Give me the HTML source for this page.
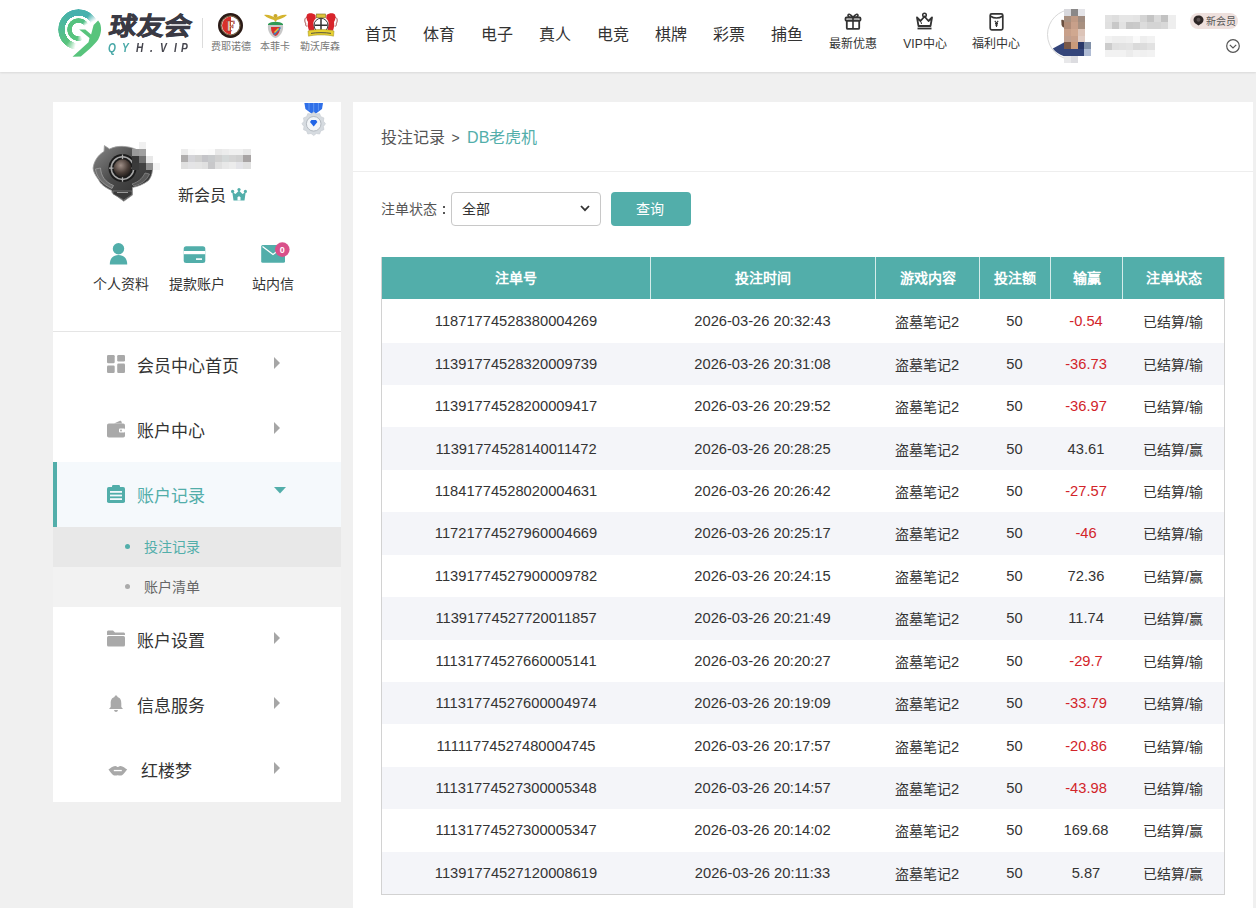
<!DOCTYPE html>
<html lang="zh-CN">
<head>
<meta charset="utf-8">
<style>
*{margin:0;padding:0;box-sizing:border-box}
html,body{width:1256px;height:908px;overflow:hidden;background:#f0f0f0;font-family:"Liberation Sans",sans-serif;color:#333}
.a{position:absolute;white-space:nowrap}
svg{position:absolute;overflow:visible}
#hdr{position:absolute;left:0;top:0;width:1256px;height:72px;background:#fff;box-shadow:0 1px 2px rgba(0,0,0,.10)}
.nav{font-size:16px;color:#333;line-height:20px;top:24.5px}
.hi{font-size:12px;color:#333;line-height:14px;top:37px;width:80px;text-align:center}
.club{font-size:10px;color:#777;line-height:12px;top:40.5px;width:60px;text-align:center}
#side1{position:absolute;left:53px;top:102px;width:288px;height:425px;background:#fff}
#sep{position:absolute;left:53px;top:331px;width:288px;height:1px;background:#e5e5e5}
#act{position:absolute;left:53px;top:462px;width:288px;height:65px;background:#f5f9fc;border-left:4px solid #52aeaa}
#sub1{position:absolute;left:53px;top:527px;width:288px;height:40px;background:#e8e8e8}
#sub2{position:absolute;left:53px;top:567px;width:288px;height:40px;background:#f2f2f2}
#side2{position:absolute;left:53px;top:607px;width:288px;height:195px;background:#fff}
.mi{font-size:17px;color:#333;line-height:20px;left:137px;margin-top:2px}
.sm{font-size:14px;line-height:16px;left:144px}
.dot{position:absolute;left:125px;width:5px;height:5px;border-radius:50%}
.arr{position:absolute;left:274px;width:0;height:0;border-top:6px solid transparent;border-bottom:6px solid transparent;border-left:6px solid #a6a6a6}
.qi{font-size:14px;color:#333;line-height:16px;top:276px;width:76px;text-align:center}
#main{position:absolute;left:353px;top:102px;width:900px;height:806px;background:#fff}
#bcl{position:absolute;left:353px;top:171px;width:900px;height:1px;background:#eee}
table{position:absolute;left:381px;top:256.5px;width:844px;border-collapse:separate;border-spacing:0;table-layout:fixed;border:1px solid #d2d2d2;border-top:none}
th{background:#52aeaa;color:#fff;font-size:14px;font-weight:bold;height:42.5px;border-left:1px solid #d5ecea;padding:0;text-align:center;line-height:16px;padding-top:0}
th:first-child{border-left:none}
td{height:42.43px;font-size:14px;color:#333;text-align:center;padding:0}
.n{font-size:14.7px}
tbody tr:nth-child(even) td{background:#f4f5f9}
tbody tr:first-child td{height:43.6px}
.neg{color:#d2242a}
</style>
</head>
<body>
<div id="hdr"></div>
<!-- LOGO -->
<div class="a" style="left:58.15px;top:8.75px;width:40.9px;height:40.9px;border-radius:50%;background:conic-gradient(from 190deg, rgba(88,197,122,0) 0deg, #58c47c 30deg, #4fb99a 95deg, #46b0ad 150deg, #48b1ae 205deg, rgba(72,177,174,0) 232deg, rgba(0,0,0,0) 360deg);-webkit-mask:radial-gradient(circle closest-side, transparent 66.5%, #000 67.5%, #000 99%, transparent 100%)"></div>
<div class="a" style="left:67.1px;top:17.7px;width:23px;height:23px;border-radius:50%;background:conic-gradient(from 158deg, rgba(90,196,126,0) 0deg, #58c47e 30deg, #56c27f 200deg, #52bf86 235deg, rgba(82,191,134,0) 261deg, rgba(0,0,0,0) 360deg);-webkit-mask:radial-gradient(circle closest-side, transparent 57.5%, #000 59%, #000 98%, transparent 100%)"></div>
<svg style="left:54px;top:4px" width="52" height="58" viewBox="0 0 52 58">
 <path d="M25.2 25.6 L31.3 25.6 L37.1 30.5 L39.6 21.1 L44.1 16.6 L46 19.2 C47 22 47.3 25 47 26.8 C46.6 30 45.6 33 44.1 35.8 C41.5 39.5 38.5 42 35.8 44.7 L26.8 52.4 L18.5 52.7 L34.5 38.3 L35.5 34 Z" fill="#58c47c"/>
</svg>
<div class="a" style="left:109.5px;top:11px;font-size:25px;line-height:30px;font-weight:bold;-webkit-text-stroke:.7px #3a3a44;color:#3a3a44;transform-origin:0 50%;transform:scaleX(1.09) skewX(-9deg);letter-spacing:0px">球友会</div>
<div class="a" style="left:108px;top:41px;font-size:13px;line-height:14px;font-weight:bold;font-style:italic;color:#4aa9a8;transform-origin:0 0;transform:scaleX(.78)">Q</div>
<div class="a" style="left:122px;top:41px;font-size:13px;line-height:14px;font-weight:bold;font-style:italic;color:#4aa9a8;transform-origin:0 0;transform:scaleX(.78)">Y</div>
<div class="a" style="left:136px;top:41px;font-size:13px;line-height:14px;font-weight:bold;font-style:italic;color:#46464e;transform-origin:0 0;transform:scaleX(.78)">H</div>
<div class="a" style="left:149.5px;top:41px;font-size:13px;line-height:14px;font-weight:bold;font-style:italic;color:#46464e;transform-origin:0 0;transform:scaleX(.78)">.</div>
<div class="a" style="left:160px;top:41px;font-size:13px;line-height:14px;font-weight:bold;font-style:italic;color:#46464e;transform-origin:0 0;transform:scaleX(.78)">V</div>
<div class="a" style="left:173.5px;top:41px;font-size:13px;line-height:14px;font-weight:bold;font-style:italic;color:#46464e;transform-origin:0 0;transform:scaleX(.78)">I</div>
<div class="a" style="left:181px;top:41px;font-size:13px;line-height:14px;font-weight:bold;font-style:italic;color:#46464e;transform-origin:0 0;transform:scaleX(.78)">P</div>
<div class="a" style="left:202px;top:18px;width:1px;height:30px;background:#dcdcdc"></div>
<!-- clubs -->
<svg style="left:218px;top:12.5px" width="25" height="25" viewBox="0 0 25 25">
 <circle cx="12.5" cy="12.5" r="12.5" fill="#2a1a16"/>
 <circle cx="12.5" cy="12.5" r="9.6" fill="none" stroke="#b89a60" stroke-width=".6"/>
 <circle cx="12.5" cy="12.5" r="9" fill="#fff"/>
 <path d="M13 3.5 A9 9 0 0 0 13 21.5 Z" fill="#d8302a"/>
 <text x="12.8" y="18.2" font-size="14" font-weight="bold" font-family="Liberation Serif" text-anchor="middle" fill="#f3e2cc" stroke="#9a2a20" stroke-width=".5">F</text>
</svg>
<svg style="left:263px;top:12.5px" width="25" height="25" viewBox="0 0 25 25">
 <path d="M1 2 C5 1 9 3 12.5 5 C16 3 20 1 24 2 C21 5 17 6 14 7 L12.5 9 L11 7 C8 6 4 5 1 2 Z" fill="#d4b42e"/>
 <circle cx="12.5" cy="3" r="2" fill="#c9a72a"/>
 <path d="M5 11 C8 8 17 8 20 11 L20 12 L5 12 Z" fill="#2f9a55"/>
 <path d="M5 12 L20 12 C21 18 17 24 12.5 25 C8 24 4 18 5 12 Z" fill="#c8c8c8"/>
 <path d="M8 14 L17 14 C17 19 15 22 12.5 23 C10 22 8 19 8 14 Z" fill="#d9302c"/>
 <path d="M10 21 L17 14 L18 15 L12 22 Z" fill="#3a7ec8"/>
 <path d="M11 19 L15 15 L16 16 L12 20 Z" fill="#e6c630"/>
</svg>
<svg style="left:300px;top:8px" width="42" height="32" viewBox="0 0 42 32">
 <path d="M7 9 C4 10 4.5 14 6 16 C5 17 6 18.5 7.5 18" fill="none" stroke="#9a3a3a" stroke-width=".9"/>
 <path d="M35 9 C38 10 37.5 14 36 16 C37 17 36 18.5 34.5 18" fill="none" stroke="#9a3a3a" stroke-width=".9"/>
 <path d="M7 6.5 C9 4.5 13 5 15.5 7 L15.8 10.5 C14 12 13 14 13.5 17 L14.5 22.5 L9 22.5 C8 20 7.5 17 8 14 C6.5 12 6 9 7 6.5 Z" fill="#d8232a"/>
 <path d="M35 6.5 C33 4.5 29 5 26.5 7 L26.2 10.5 C28 12 29 14 28.5 17 L27.5 22.5 L33 22.5 C34 20 34.5 17 34 14 C35.5 12 36 9 35 6.5 Z" fill="#d8232a"/>
 <rect x="16.5" y="6" width="9" height="3.8" fill="#dcc23a" stroke="#7a6a20" stroke-width=".6"/>
 <circle cx="21" cy="17.3" r="7" fill="#fff" stroke="#333" stroke-width="1"/>
 <path d="M21 10.8 V23.8 M14.5 17.3 H27.5" stroke="#333" stroke-width="1.5"/>
 <path d="M8 23 C14 21 28 21 34 23 L33.5 28.2 C28 26.5 14 26.5 8.5 28.2 Z" fill="#e6d030" stroke="#9a8a20" stroke-width=".5"/>
 <path d="M11 25.4 C16 24.4 26 24.4 31 25.4" fill="none" stroke="#444" stroke-width=".9"/>
</svg>
<div class="a club" style="left:201px">费耶诺德</div>
<div class="a club" style="left:245px">本菲卡</div>
<div class="a club" style="left:290px">勒沃库森</div>
<!-- nav -->
<div class="a nav" style="left:365px">首页</div>
<div class="a nav" style="left:423px">体育</div>
<div class="a nav" style="left:481px">电子</div>
<div class="a nav" style="left:539px">真人</div>
<div class="a nav" style="left:597px">电竞</div>
<div class="a nav" style="left:655px">棋牌</div>
<div class="a nav" style="left:713px">彩票</div>
<div class="a nav" style="left:771px">捕鱼</div>
<!-- header icons -->
<svg style="left:844px;top:12px" width="18" height="18" viewBox="0 0 18 18">
 <path d="M9 5.5 C7 2 4 1.5 4 3.5 C4 5 6.5 5.5 9 5.5 C11.5 5.5 14 5 14 3.5 C14 1.5 11 2 9 5.5Z" fill="none" stroke="#333" stroke-width="1.6"/>
 <rect x="1.5" y="5.5" width="15" height="3.2" rx="1" fill="none" stroke="#333" stroke-width="1.8"/>
 <rect x="2.8" y="8.7" width="12.4" height="8.2" rx="1" fill="none" stroke="#333" stroke-width="1.8"/>
 <path d="M9 5.5 V17" stroke="#333" stroke-width="1.6"/>
</svg>
<svg style="left:915px;top:12px" width="19" height="18" viewBox="0 0 19 18">
 <circle cx="9.5" cy="3" r="1.8" fill="none" stroke="#333" stroke-width="1.5"/>
 <path d="M2 5.5 L5.5 9 L9.5 4.5 L13.5 9 L17 5.5 L15.5 14 H3.5 Z" fill="none" stroke="#333" stroke-width="1.8" stroke-linejoin="round"/>
 <path d="M2.5 16.5 H16.5" stroke="#333" stroke-width="1.8"/>
 <path d="M6 10 L6.5 12" stroke="#333" stroke-width="1"/>
</svg>
<svg style="left:988px;top:12px" width="16" height="19" viewBox="0 0 16 19">
 <rect x="2.2" y="1.8" width="12.6" height="16" rx="1.5" fill="none" stroke="#333" stroke-width="1.7"/>
 <path d="M2.2 4 C6 6.5 11 6.5 14.8 4" fill="none" stroke="#333" stroke-width="1.5"/>
 <path d="M6.8 8.8 L8.5 11 L10.2 8.8 M8.5 11 V15 M7 11.5 H10 M7 13 H10" fill="none" stroke="#333" stroke-width="1.1"/>
</svg>
<div class="a hi" style="left:813px">最新优惠</div>
<div class="a hi" style="left:885px">VIP中心</div>
<div class="a hi" style="left:956px">福利中心</div>
<!-- user -->
<div class="a" style="left:1046.5px;top:8.5px;width:51px;height:51px;border-radius:50%;border:1px solid #d8d8d8;background:#fff"></div>
<div class="a" style="left:1064px;top:6px;width:36px;height:56px;background:#fff"></div>
<svg style="left:1046px;top:8px" width="60" height="57" viewBox="0 0 60 57">
 <path d="M6.8 40.4 L18 34.4 L18 48.2 C13 46.5 9.5 44 6.8 40.4 Z" fill="#34457a"/>
 <path d="M15.3 12 C16.5 11.5 17.5 12 18 12.5 L18 19.5 C16.8 19.5 15.8 18.5 15.5 16.5 Z" fill="#6a5040"/>
</svg>
<div class="a" style="left:1064.1px;top:8.9px;width:7.1px;height:7.1px;background:#d8d8dc"></div>
<div class="a" style="left:1070.8px;top:8.9px;width:7.1px;height:7.1px;background:#8a8888"></div>
<div class="a" style="left:1077.5px;top:8.9px;width:7.1px;height:7.1px;background:#e4e4e8"></div>
<div class="a" style="left:1064.1px;top:15.6px;width:7.1px;height:7.1px;background:#a89080"></div>
<div class="a" style="left:1070.8px;top:15.6px;width:7.1px;height:7.1px;background:#c09a84"></div>
<div class="a" style="left:1077.5px;top:15.6px;width:7.1px;height:7.1px;background:#a08c80"></div>
<div class="a" style="left:1064.1px;top:22.3px;width:7.1px;height:7.1px;background:#b08c78"></div>
<div class="a" style="left:1070.8px;top:22.3px;width:7.1px;height:7.1px;background:#c8a08a"></div>
<div class="a" style="left:1077.5px;top:22.3px;width:7.1px;height:7.1px;background:#a89080"></div>
<div class="a" style="left:1064.1px;top:29.0px;width:7.1px;height:7.1px;background:#c8a08a"></div>
<div class="a" style="left:1070.8px;top:29.0px;width:7.1px;height:7.1px;background:#d0a890"></div>
<div class="a" style="left:1077.5px;top:29.0px;width:7.1px;height:7.1px;background:#dcc4b8"></div>
<div class="a" style="left:1064.1px;top:35.7px;width:7.1px;height:7.1px;background:#c0a090"></div>
<div class="a" style="left:1070.8px;top:35.7px;width:7.1px;height:7.1px;background:#c8a08a"></div>
<div class="a" style="left:1077.5px;top:35.7px;width:7.1px;height:7.1px;background:#e0ccc4"></div>
<div class="a" style="left:1064.1px;top:42.4px;width:7.1px;height:7.1px;background:#7a5848"></div>
<div class="a" style="left:1070.8px;top:42.4px;width:7.1px;height:7.1px;background:#c99a7a"></div>
<div class="a" style="left:1077.5px;top:42.4px;width:7.1px;height:7.1px;background:#2a3868"></div>
<div class="a" style="left:1084.2px;top:42.4px;width:7.1px;height:7.1px;background:#8090a8"></div>
<div class="a" style="left:1064.1px;top:49.1px;width:7.1px;height:7.1px;background:#34457a"></div>
<div class="a" style="left:1070.8px;top:49.1px;width:7.1px;height:7.1px;background:#34457a"></div>
<div class="a" style="left:1077.5px;top:49.1px;width:7.1px;height:7.1px;background:#34457a"></div>
<div class="a" style="left:1084.2px;top:49.1px;width:7.1px;height:7.1px;background:#b0bcd4"></div>
<div class="a" style="left:1064.1px;top:55.8px;width:7.1px;height:7.1px;background:#e8e8ea"></div>
<div class="a" style="left:1070.8px;top:55.8px;width:7.1px;height:7.1px;background:#dcdce0"></div>
<div class="a" style="left:1105.4px;top:15.4px;width:7.4px;height:7.2px;background:#e2e2e2"></div>
<div class="a" style="left:1112.4px;top:15.4px;width:7.4px;height:7.2px;background:#dedede"></div>
<div class="a" style="left:1119.4px;top:15.4px;width:7.4px;height:7.2px;background:#e6e6e6"></div>
<div class="a" style="left:1126.4px;top:15.4px;width:7.4px;height:7.2px;background:#e6e6e6"></div>
<div class="a" style="left:1133.4px;top:15.4px;width:7.4px;height:7.2px;background:#e4e4e4"></div>
<div class="a" style="left:1140.4px;top:15.4px;width:7.4px;height:7.2px;background:#d4d4d4"></div>
<div class="a" style="left:1147.4px;top:15.4px;width:7.4px;height:7.2px;background:#c4c4c4"></div>
<div class="a" style="left:1154.4px;top:15.4px;width:7.4px;height:7.2px;background:#dadada"></div>
<div class="a" style="left:1161.4px;top:15.4px;width:7.4px;height:7.2px;background:#c2c2c2"></div>
<div class="a" style="left:1168.4px;top:15.4px;width:7.4px;height:7.2px;background:#eeeeee"></div>
<div class="a" style="left:1105.4px;top:22.2px;width:7.4px;height:7.2px;background:#e0e0e0"></div>
<div class="a" style="left:1112.4px;top:22.2px;width:7.4px;height:7.2px;background:#c8c8c8"></div>
<div class="a" style="left:1119.4px;top:22.2px;width:7.4px;height:7.2px;background:#e2e2e2"></div>
<div class="a" style="left:1126.4px;top:22.2px;width:7.4px;height:7.2px;background:#c8c8c8"></div>
<div class="a" style="left:1133.4px;top:22.2px;width:7.4px;height:7.2px;background:#cacaca"></div>
<div class="a" style="left:1140.4px;top:22.2px;width:7.4px;height:7.2px;background:#dcdcdc"></div>
<div class="a" style="left:1147.4px;top:22.2px;width:7.4px;height:7.2px;background:#d4d4d4"></div>
<div class="a" style="left:1154.4px;top:22.2px;width:7.4px;height:7.2px;background:#d4d4d4"></div>
<div class="a" style="left:1161.4px;top:22.2px;width:7.4px;height:7.2px;background:#d8d8d8"></div>
<div class="a" style="left:1168.4px;top:22.2px;width:7.4px;height:7.2px;background:#eeeeee"></div>
<div class="a" style="left:1105.4px;top:36.1px;width:7.4px;height:7.4px;background:#f2f2f2"></div>
<div class="a" style="left:1112.4px;top:36.1px;width:7.4px;height:7.4px;background:#eeeeee"></div>
<div class="a" style="left:1119.4px;top:36.1px;width:7.4px;height:7.4px;background:#eeeeee"></div>
<div class="a" style="left:1126.4px;top:36.1px;width:7.4px;height:7.4px;background:#f0f0f0"></div>
<div class="a" style="left:1133.4px;top:36.1px;width:7.4px;height:7.4px;background:#fafafa"></div>
<div class="a" style="left:1140.4px;top:36.1px;width:7.4px;height:7.4px;background:#eeeeee"></div>
<div class="a" style="left:1147.4px;top:36.1px;width:7.4px;height:7.4px;background:#f2f2f2"></div>
<div class="a" style="left:1105.4px;top:43.1px;width:7.4px;height:7.4px;background:#cccccc"></div>
<div class="a" style="left:1112.4px;top:43.1px;width:7.4px;height:7.4px;background:#e0e0e0"></div>
<div class="a" style="left:1119.4px;top:43.1px;width:7.4px;height:7.4px;background:#e2e2e2"></div>
<div class="a" style="left:1126.4px;top:43.1px;width:7.4px;height:7.4px;background:#e4e4e4"></div>
<div class="a" style="left:1133.4px;top:43.1px;width:7.4px;height:7.4px;background:#dadada"></div>
<div class="a" style="left:1140.4px;top:43.1px;width:7.4px;height:7.4px;background:#dcdcdc"></div>
<div class="a" style="left:1147.4px;top:43.1px;width:7.4px;height:7.4px;background:#e2e2e2"></div>
<div class="a" style="left:1105.4px;top:50.1px;width:7.4px;height:7.4px;background:#f2f2f2"></div>
<div class="a" style="left:1112.4px;top:50.1px;width:7.4px;height:7.4px;background:#f2f2f2"></div>
<div class="a" style="left:1119.4px;top:50.1px;width:7.4px;height:7.4px;background:#f2f2f2"></div>
<div class="a" style="left:1126.4px;top:50.1px;width:7.4px;height:7.4px;background:#ececec"></div>
<div class="a" style="left:1133.4px;top:50.1px;width:7.4px;height:7.4px;background:#f2f2f2"></div>
<div class="a" style="left:1140.4px;top:50.1px;width:7.4px;height:7.4px;background:#f0f0f0"></div>
<div class="a" style="left:1147.4px;top:50.1px;width:7.4px;height:7.4px;background:#f2f2f2"></div>
<div class="a" style="left:1190px;top:12.5px;width:48px;height:16.5px;border-radius:8px;background:#eee0dd"></div>
<svg style="left:1193px;top:15px" width="11" height="11" viewBox="0 0 11 11">
 <path d="M5.5 0.5 C8.5 0.5 10.5 2.5 10.5 5 C10.5 7.5 8 9 5.5 10.5 C3 9 0.5 7.5 0.5 5 C0.5 2.5 2.5 0.5 5.5 0.5Z" fill="#2e2626"/>
 <circle cx="5.5" cy="4.8" r="2" fill="#5a5050"/>
</svg>
<div class="a" style="left:1206px;top:14.5px;font-size:10px;line-height:13px;color:#555">新会员</div>
<svg style="left:1226px;top:39px" width="14" height="14" viewBox="0 0 14 14">
 <circle cx="7" cy="7" r="6.3" fill="none" stroke="#555" stroke-width="1.2"/>
 <path d="M3.8 5.8 L7 9 L10.2 5.8" fill="none" stroke="#555" stroke-width="1.2"/>
</svg>

<!-- SIDEBAR -->
<div id="side1"></div>
<div id="sep"></div>
<div id="act"></div>
<div id="sub1"></div>
<div id="sub2"></div>
<div id="side2"></div>
<!-- medal -->
<svg style="left:300px;top:102px" width="28" height="34" viewBox="0 0 28 34">
 <path d="M4.4 1 H23 L22 7 L16 11.5 H11.4 L5.4 7 Z" fill="#2f6fe8"/>
 <path d="M9 1 V8.5 M13.7 1 V11 M18.4 1 V8.5" stroke="#6a9ff4" stroke-width=".8"/>
 <path d="M13.7 10.0 L16.3 12.1 L19.6 11.6 L20.8 14.7 L23.9 15.9 L23.4 19.2 L25.5 21.8 L23.4 24.4 L23.9 27.7 L20.8 28.9 L19.6 32.0 L16.3 31.5 L13.7 33.6 L11.1 31.5 L7.8 32.0 L6.6 28.9 L3.5 27.7 L4.0 24.4 L1.9 21.8 L4.0 19.2 L3.5 15.9 L6.6 14.7 L7.8 11.6 L11.1 12.1 Z" fill="#d6dbe0" stroke="#c4cad0" stroke-width=".6"/>
 <circle cx="13.7" cy="21.8" r="7.3" fill="#f2f5f8" stroke="#b4bac0" stroke-width="1"/>
 <path d="M10 20 L11.4 18 H16 L17.4 20 L13.7 24.6 Z" fill="#1f64e6"/>
</svg>
<!-- avatar badge -->
<svg style="left:92px;top:144px" width="62" height="58" viewBox="0 0 62 58">
 <defs>
  <linearGradient id="bgm" x1="0" y1="0" x2="1" y2="1"><stop offset="0" stop-color="#8a8a8a"/><stop offset=".45" stop-color="#4a4a4a"/><stop offset="1" stop-color="#2a2a2a"/></linearGradient>
  <radialGradient id="bg2" cx=".4" cy=".35" r=".7"><stop offset="0" stop-color="#a09088"/><stop offset=".6" stop-color="#4a3e38"/><stop offset="1" stop-color="#1e1a18"/></radialGradient>
 </defs>
 <path d="M12.4 1.6 L17.5 5 C22 2.8 27 2.2 31 2.4 C40 2.8 48 6 53 12 C58 16 60.5 21 60.5 26 C60 31 58.5 34 56.5 36.5 C52 40 46 42.5 40.5 43.5 L40.5 51 L31.75 57.25 L19.9 48.5 L19.9 46.6 C13 43.5 8.5 40 6.75 36 C3 31 1.1 27 1.1 24.1 C2 17 6 11 12 7.5 Z" fill="url(#bgm)" stroke="#9a9a9a" stroke-width=".8"/>
 <path d="M3.5 25 C4.5 33 10 40 20 44.5 L21.5 41.5 C13 38 9 32 8.5 24 Z" fill="#6e6e6e" stroke="#a8a8a8" stroke-width=".7"/>
 <path d="M42 42 C50 40 55 36 57.5 30 L53 29 C50 35 46 38 40 40 Z" fill="#5a5a5a" stroke="#999" stroke-width=".6"/>
 <circle cx="30.5" cy="24.1" r="14" fill="#1c1c1c"/>
 <circle cx="30.5" cy="24.1" r="11.3" fill="none" stroke="#a8a8a8" stroke-width="1.5"/>
 <circle cx="30.5" cy="24.1" r="8.8" fill="url(#bg2)"/>
 <path d="M30.5 10.5 V15 M30.5 33.2 V37.7 M17 24.1 H21.5 M39.5 24.1 H44" stroke="#b0b0b0" stroke-width="1.3"/>
 <path d="M21 47 L40 47 L40 50.5 L31.75 56 L21 50 Z" fill="#3a3a3a" stroke="#8a8a8a" stroke-width=".6"/>
 <path d="M25 48.5 H36" stroke="#999" stroke-width="1"/>
</svg>
<div class="a" style="left:139.0px;top:141.7px;width:7.2px;height:7.4px;background:#f0f0f0"></div>
<div class="a" style="left:132.2px;top:148.6px;width:7.2px;height:7.4px;background:#9a9a9a"></div>
<div class="a" style="left:139.0px;top:148.6px;width:7.2px;height:7.4px;background:#a0a0a0"></div>
<div class="a" style="left:132.2px;top:155.6px;width:7.2px;height:7.4px;background:#383838"></div>
<div class="a" style="left:139.0px;top:155.6px;width:7.2px;height:7.4px;background:#707070"></div>
<div class="a" style="left:145.8px;top:155.6px;width:7.2px;height:7.4px;background:#e8e8e8"></div>
<div class="a" style="left:132.2px;top:162.5px;width:7.2px;height:7.4px;background:#3a3a3a"></div>
<div class="a" style="left:139.0px;top:162.5px;width:7.2px;height:7.4px;background:#404040"></div>
<div class="a" style="left:145.8px;top:162.5px;width:7.2px;height:7.4px;background:#909090"></div>
<div class="a" style="left:152.6px;top:162.5px;width:7.2px;height:7.4px;background:#f2f2f2"></div>
<div class="a" style="left:180.6px;top:148.6px;width:7.4px;height:7.2px;background:#ececec"></div>
<div class="a" style="left:187.6px;top:148.6px;width:7.4px;height:7.2px;background:#fafafa"></div>
<div class="a" style="left:194.5px;top:148.6px;width:7.4px;height:7.2px;background:#fcfcfc"></div>
<div class="a" style="left:201.5px;top:148.6px;width:7.4px;height:7.2px;background:#fcfcfc"></div>
<div class="a" style="left:208.4px;top:148.6px;width:7.4px;height:7.2px;background:#fafafa"></div>
<div class="a" style="left:215.4px;top:148.6px;width:7.4px;height:7.2px;background:#e8e8e8"></div>
<div class="a" style="left:222.4px;top:148.6px;width:7.4px;height:7.2px;background:#ececec"></div>
<div class="a" style="left:229.3px;top:148.6px;width:7.4px;height:7.2px;background:#f0f0f0"></div>
<div class="a" style="left:236.3px;top:148.6px;width:7.4px;height:7.2px;background:#f0f0f0"></div>
<div class="a" style="left:243.2px;top:148.6px;width:7.4px;height:7.2px;background:#e8e8e8"></div>
<div class="a" style="left:180.6px;top:155.4px;width:7.4px;height:7.2px;background:#b0aeae"></div>
<div class="a" style="left:187.6px;top:155.4px;width:7.4px;height:7.2px;background:#d4d4d8"></div>
<div class="a" style="left:194.5px;top:155.4px;width:7.4px;height:7.2px;background:#d0d0d0"></div>
<div class="a" style="left:201.5px;top:155.4px;width:7.4px;height:7.2px;background:#c4c4c8"></div>
<div class="a" style="left:208.4px;top:155.4px;width:7.4px;height:7.2px;background:#c8cacc"></div>
<div class="a" style="left:215.4px;top:155.4px;width:7.4px;height:7.2px;background:#d0d0d0"></div>
<div class="a" style="left:222.4px;top:155.4px;width:7.4px;height:7.2px;background:#d4d8d8"></div>
<div class="a" style="left:229.3px;top:155.4px;width:7.4px;height:7.2px;background:#d4d4d4"></div>
<div class="a" style="left:236.3px;top:155.4px;width:7.4px;height:7.2px;background:#d0d0d0"></div>
<div class="a" style="left:243.2px;top:155.4px;width:7.4px;height:7.2px;background:#a8a4a4"></div>
<div class="a" style="left:180.6px;top:162.3px;width:7.4px;height:7.2px;background:#e0e0e0"></div>
<div class="a" style="left:187.6px;top:162.3px;width:7.4px;height:7.2px;background:#e4e4e6"></div>
<div class="a" style="left:194.5px;top:162.3px;width:7.4px;height:7.2px;background:#e4e4e4"></div>
<div class="a" style="left:201.5px;top:162.3px;width:7.4px;height:7.2px;background:#e0e0e0"></div>
<div class="a" style="left:208.4px;top:162.3px;width:7.4px;height:7.2px;background:#c8c8ca"></div>
<div class="a" style="left:215.4px;top:162.3px;width:7.4px;height:7.2px;background:#e0e0e0"></div>
<div class="a" style="left:222.4px;top:162.3px;width:7.4px;height:7.2px;background:#e8e8e8"></div>
<div class="a" style="left:229.3px;top:162.3px;width:7.4px;height:7.2px;background:#ececec"></div>
<div class="a" style="left:236.3px;top:162.3px;width:7.4px;height:7.2px;background:#e4e4e8"></div>
<div class="a" style="left:243.2px;top:162.3px;width:7.4px;height:7.2px;background:#e0e0e0"></div>
<div class="a" style="left:178px;top:186px;font-size:16px;line-height:19px;color:#333">新会员</div>
<svg style="left:231px;top:188px" width="16" height="13" viewBox="0 0 16 13">
 <circle cx="8" cy="1.6" r="1.6" fill="#52aeaa"/>
 <circle cx="1.6" cy="3.4" r="1.6" fill="#52aeaa"/>
 <circle cx="14.4" cy="3.4" r="1.6" fill="#52aeaa"/>
 <path d="M1.3 4 L4.5 6 L8 2.5 L11.5 6 L14.7 4 L13.5 12.5 H2.5 Z" fill="#52aeaa"/>
 <path d="M6.5 12.5 V9.5 L8 8 L9.5 9.5 V12.5 Z" fill="#fff"/>
</svg>
<!-- quick icons -->
<svg style="left:109px;top:242px" width="19" height="23" viewBox="0 0 19 23">
 <circle cx="9.5" cy="6.8" r="5.7" fill="#52aeaa"/>
 <path d="M0.8 22.4 C0.8 16.5 4 13 9.5 13 C15 13 18.2 16.5 18.2 22.4 Z" fill="#52aeaa"/>
</svg>
<svg style="left:183px;top:246px" width="23" height="18" viewBox="0 0 23 18">
 <rect x=".7" y=".2" width="21.6" height="16.9" rx="2.5" fill="#52aeaa"/>
 <rect x=".7" y="5" width="21.6" height="3.2" fill="#fff"/>
 <rect x="13" y="12.3" width="6" height="1.6" fill="#fff"/>
</svg>
<svg style="left:261px;top:242px" width="30" height="22" viewBox="0 0 30 22">
 <rect x=".2" y="3" width="23.8" height="17.7" rx="1.5" fill="#52aeaa"/>
 <path d="M1.5 4.5 L12 12.5 L22.5 4.5" fill="none" stroke="#fff" stroke-width="1.3"/>
 <circle cx="21.3" cy="7.6" r="7.3" fill="#d9508a"/>
 <text x="21.3" y="10.8" font-size="9" font-weight="bold" font-family="Liberation Sans" text-anchor="middle" fill="#fff">0</text>
</svg>
<div class="a qi" style="left:83px">个人资料</div>
<div class="a qi" style="left:158.5px">提款账户</div>
<div class="a qi" style="left:235px">站内信</div>
<!-- menu -->
<svg style="left:107px;top:355px" width="18" height="18" viewBox="0 0 18 18">
 <rect x="0" y="0" width="7.7" height="8.3" rx="1.2" fill="#a9a9a9"/>
 <rect x="0" y="10.5" width="7.7" height="7.5" rx="1.2" fill="#a9a9a9"/>
 <rect x="10.2" y="0" width="7.8" height="6.5" rx="1.2" fill="#a9a9a9"/>
 <rect x="10.2" y="8.6" width="7.8" height="9.4" rx="1.2" fill="#a9a9a9"/>
</svg>
<div class="a mi" style="top:355px">会员中心首页</div>
<div class="arr" style="top:357px"></div>
<svg style="left:107px;top:420px" width="18" height="18" viewBox="0 0 18 18">
 <path d="M7 3.5 L13 0.8 C13.8 .5 14.3 1 14.5 1.8 L15 3.5 Z" fill="#a9a9a9"/>
 <rect x="0" y="3.5" width="18" height="14" rx="1.8" fill="#a9a9a9"/>
 <rect x="12" y="8.5" width="6" height="4" rx="1" fill="#fff"/>
 <circle cx="14" cy="10.5" r=".9" fill="#a9a9a9"/>
</svg>
<div class="a mi" style="top:420px">账户中心</div>
<div class="arr" style="top:422px"></div>
<svg style="left:107px;top:485px" width="18" height="18" viewBox="0 0 18 18">
 <rect x="0" y="2" width="18" height="16" rx="1.8" fill="#52aeaa"/>
 <rect x="5" y="0" width="8" height="3.5" rx="1.2" fill="#52aeaa"/>
 <rect x="3" y="6" width="12" height="1.8" fill="#f5f9fc"/>
 <rect x="3" y="9.6" width="12" height="1.8" fill="#f5f9fc"/>
 <rect x="3" y="13.2" width="12" height="1.8" fill="#f5f9fc"/>
</svg>
<div class="a mi" style="top:485px;color:#52aeaa">账户记录</div>
<svg style="left:274px;top:486.5px" width="12" height="7" viewBox="0 0 12 7"><path d="M0 0 H12 L6 6.5 Z" fill="#52aeaa"/></svg>
<div class="dot" style="top:544px;background:#52aeaa"></div>
<div class="a sm" style="top:539px;color:#52aeaa">投注记录</div>
<div class="dot" style="top:584px;background:#aaa"></div>
<div class="a sm" style="top:579px;color:#666">账户清单</div>
<svg style="left:107px;top:630px" width="18" height="17" viewBox="0 0 18 17">
 <path d="M0 2 C0 1 .7 0.5 1.5 0.5 H6 L8 2.5 H16.5 C17.3 2.5 18 3 18 4 V5 H0 Z" fill="#a9a9a9"/>
 <rect x="0" y="6" width="18" height="10.5" rx="1.5" fill="#a9a9a9"/>
</svg>
<div class="a mi" style="top:630px">账户设置</div>
<div class="arr" style="top:632px"></div>
<svg style="left:108px;top:695px" width="16" height="17" viewBox="0 0 16 17">
 <path d="M8 0.5 C9 0.5 9.5 1.2 9.5 2 C12.5 2.8 13.3 5.5 13.3 8.5 V12 L15 14 H1 L2.7 12 V8.5 C2.7 5.5 3.5 2.8 6.5 2 C6.5 1.2 7 0.5 8 0.5Z" fill="#a9a9a9"/>
 <path d="M6 15 C6.3 16.3 7 17 8 17 C9 17 9.7 16.3 10 15 Z" fill="#a9a9a9"/>
</svg>
<div class="a mi" style="top:695px">信息服务</div>
<div class="arr" style="top:697px"></div>
<svg style="left:108px;top:765px" width="20" height="11" viewBox="0 0 20 11">
 <path d="M0.45 4.4 C2.5 3 4.5 1 7.1 0.9 C8.4 0.8 9.2 1.8 9.8 2.1 C10.4 1.8 11.2 0.8 12.5 0.9 C15 1 17 3 19.2 4.4 C17.5 6.5 15 10.5 12.5 10.6 C11.2 10.6 10.4 10.1 9.8 10.2 C9.2 10.1 8.4 10.6 7.1 10.6 C4.5 10.5 2 6.5 0.45 4.4 Z" fill="#a9a9a9"/>
 <rect x="5.8" y="4.9" width="8" height="1.3" fill="#fff"/>
</svg>
<div class="a mi" style="top:760px;left:141px">红楼梦</div>
<div class="arr" style="top:762px"></div>

<!-- MAIN -->
<div id="main"></div>
<div class="a" style="left:381px;top:128px;font-size:16px;line-height:19px;color:#555">投注记录 <span style="font-size:14px;margin:0 2px 0 2px">&gt;</span> <span style="color:#52aeaa;margin-left:1px">DB老虎机</span></div>
<div id="bcl"></div>
<div class="a" style="left:381px;top:201px;font-size:14px;line-height:17px;color:#555">注单状态</div>
<div class="a" style="left:443px;top:206px;width:2px;height:2px;background:#555"></div>
<div class="a" style="left:443px;top:212px;width:2px;height:2px;background:#555"></div>
<div class="a" style="left:451px;top:192px;width:150px;height:34px;border:1px solid #c8c8c8;border-radius:4px;background:#fff"></div>
<div class="a" style="left:462px;top:201px;font-size:14px;line-height:17px;color:#333">全部</div>
<svg style="left:580px;top:205px" width="10" height="7" viewBox="0 0 10 7"><path d="M1 1 L5 5.2 L9 1" fill="none" stroke="#333" stroke-width="1.8"/></svg>
<div class="a" style="left:611px;top:192px;width:80px;height:34px;border-radius:4px;background:#52aeaa"></div>
<div class="a" style="left:636px;top:201px;font-size:14px;line-height:17px;color:#fff">查询</div>
<table>
<colgroup><col style="width:268px"><col style="width:225px"><col style="width:104px"><col style="width:71px"><col style="width:72px"><col style="width:102px"></colgroup>
<thead><tr><th><b>注单号</b></th><th><b>投注时间</b></th><th><b>游戏内容</b></th><th><b>投注额</b></th><th><b>输赢</b></th><th><b>注单状态</b></th></tr></thead><tbody>
<tr><td class="n">11871774528380004269</td><td class="n">2026-03-26 20:32:43</td><td>盗墓笔记<span class="n">2</span></td><td class="n">50</td><td class="n neg">-0.54</td><td>已结算/输</td></tr>
<tr><td class="n">11391774528320009739</td><td class="n">2026-03-26 20:31:08</td><td>盗墓笔记<span class="n">2</span></td><td class="n">50</td><td class="n neg">-36.73</td><td>已结算/输</td></tr>
<tr><td class="n">11391774528200009417</td><td class="n">2026-03-26 20:29:52</td><td>盗墓笔记<span class="n">2</span></td><td class="n">50</td><td class="n neg">-36.97</td><td>已结算/输</td></tr>
<tr><td class="n">11391774528140011472</td><td class="n">2026-03-26 20:28:25</td><td>盗墓笔记<span class="n">2</span></td><td class="n">50</td><td class="n">43.61</td><td>已结算/赢</td></tr>
<tr><td class="n">11841774528020004631</td><td class="n">2026-03-26 20:26:42</td><td>盗墓笔记<span class="n">2</span></td><td class="n">50</td><td class="n neg">-27.57</td><td>已结算/输</td></tr>
<tr><td class="n">11721774527960004669</td><td class="n">2026-03-26 20:25:17</td><td>盗墓笔记<span class="n">2</span></td><td class="n">50</td><td class="n neg">-46</td><td>已结算/输</td></tr>
<tr><td class="n">11391774527900009782</td><td class="n">2026-03-26 20:24:15</td><td>盗墓笔记<span class="n">2</span></td><td class="n">50</td><td class="n">72.36</td><td>已结算/赢</td></tr>
<tr><td class="n">11391774527720011857</td><td class="n">2026-03-26 20:21:49</td><td>盗墓笔记<span class="n">2</span></td><td class="n">50</td><td class="n">11.74</td><td>已结算/赢</td></tr>
<tr><td class="n">11131774527660005141</td><td class="n">2026-03-26 20:20:27</td><td>盗墓笔记<span class="n">2</span></td><td class="n">50</td><td class="n neg">-29.7</td><td>已结算/输</td></tr>
<tr><td class="n">11131774527600004974</td><td class="n">2026-03-26 20:19:09</td><td>盗墓笔记<span class="n">2</span></td><td class="n">50</td><td class="n neg">-33.79</td><td>已结算/输</td></tr>
<tr><td class="n">11111774527480004745</td><td class="n">2026-03-26 20:17:57</td><td>盗墓笔记<span class="n">2</span></td><td class="n">50</td><td class="n neg">-20.86</td><td>已结算/输</td></tr>
<tr><td class="n">11131774527300005348</td><td class="n">2026-03-26 20:14:57</td><td>盗墓笔记<span class="n">2</span></td><td class="n">50</td><td class="n neg">-43.98</td><td>已结算/输</td></tr>
<tr><td class="n">11131774527300005347</td><td class="n">2026-03-26 20:14:02</td><td>盗墓笔记<span class="n">2</span></td><td class="n">50</td><td class="n">169.68</td><td>已结算/赢</td></tr>
<tr><td class="n">11391774527120008619</td><td class="n">2026-03-26 20:11:33</td><td>盗墓笔记<span class="n">2</span></td><td class="n">50</td><td class="n">5.87</td><td>已结算/赢</td></tr>
</tbody></table>
</body>
</html>
